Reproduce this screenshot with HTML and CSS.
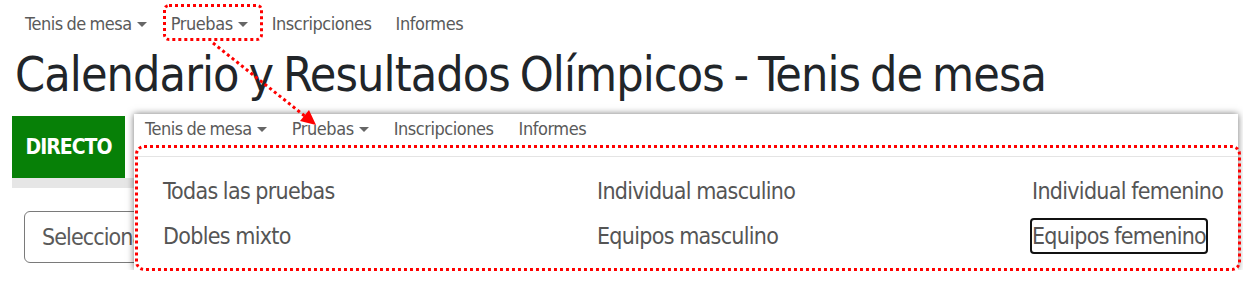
FILE: index.html
```html
<!DOCTYPE html>
<html lang="es">
<head>
<meta charset="utf-8">
<title>Calendario y Resultados Olímpicos - Tenis de mesa</title>
<link rel="stylesheet" href="styles.css">
</head>
<body>
<nav class="topnav">
  <a class="navitem">Tenis de mesa<span class="caret"></span></a>
  <a class="navitem">Pruebas<span class="caret"></span></a>
  <a class="navitem">Inscripciones</a>
  <a class="navitem">Informes</a>
</nav>
<h1 class="title">Calendario y Resultados Olímpicos - Tenis de mesa</h1>
<main class="content">
  <div class="tabbar">
    <div class="tab-live">DIRECTO</div>
  </div>
  <div class="select">Seleccionar</div>
</main>

<section class="overlay">
  <nav class="innernav">
    <a class="navitem">Tenis de mesa<span class="caret"></span></a>
    <a class="navitem">Pruebas<span class="caret"></span></a>
    <a class="navitem">Inscripciones</a>
    <a class="navitem">Informes</a>
  </nav>
  <div class="menu">
    <a class="menuitem">Todas las pruebas</a>
    <a class="menuitem">Individual masculino</a>
    <a class="menuitem">Individual femenino</a>
    <a class="menuitem">Dobles mixto</a>
    <a class="menuitem">Equipos masculino</a>
    <a class="menuitem focused">Equipos femenino</a>
  </div>
</section>

<div class="mark mark-top"></div>
<div class="mark mark-menu"></div>
<svg class="arrow" width="1243" height="292" viewBox="0 0 1243 292">
  <line x1="213" y1="43" x2="306" y2="117" stroke="#ff0000" stroke-width="3" stroke-dasharray="3 3"/>
  <polygon points="316,125 300,121 309,110" fill="#ff0000"/>
</svg>
</body>
</html>
```
FILE: styles.css
```css
* { box-sizing: border-box; }
body {
  margin: 0;
  background: #fff;
  font-family: "DejaVu Sans Condensed", "DejaVu Sans", sans-serif;
  position: relative;
  width: 1243px;
  height: 292px;
  overflow: hidden;
}
.topnav {
  display: flex;
  height: 44px;
  padding: 12px 0 0 25px;
}
.navitem {
  display: inline-flex;
  align-items: center;
  height: 24px;
  line-height: 24px;
  font-size: 18px;
  letter-spacing: -0.45px;
  word-spacing: -1px;
  color: #5a5a5a;
  margin-right: 24px;
  white-space: nowrap;
}
.caret {
  display: inline-block;
  width: 0;
  height: 0;
  margin-left: 5px;
  border-left: 5px solid transparent;
  border-right: 5px solid transparent;
  border-top: 5px solid #666;
}
.title {
  margin: 0 0 0 15px;
  font-size: 48px;
  letter-spacing: -0.9px;
  word-spacing: -3px;
  line-height: 60px;
  font-weight: normal;
  color: #212529;
  white-space: nowrap;
}
.content {
  margin: 12px 0 0 12px;
}
.tabbar {
  display: flex;
  width: 600px;
  border-bottom: 10px solid #e6e6e6;
}
.tab-live {
  width: 113px;
  height: 62px;
  background: #078007;
  color: #fff;
  font-weight: bold;
  font-size: 21px;
  letter-spacing: -1px;
  display: flex;
  align-items: center;
  justify-content: center;
}
.select {
  margin: 23px 0 0 12px;
  width: 300px;
  height: 52px;
  border: 1px solid #7a7a7a;
  border-radius: 6px;
  padding-left: 17px;
  font-size: 23px;
  letter-spacing: -0.9px;
  line-height: 50px;
  color: #5a5a5a;
  overflow: hidden;
  white-space: nowrap;
}
.overlay {
  position: absolute;
  left: 134px;
  top: 114px;
  width: 1104px;
  height: 156px;
  background: #fff;
  box-shadow: 0 0 7px rgba(0, 0, 0, 0.55);
  clip-path: inset(-12px -12px 0 -12px);
}
.innernav {
  display: flex;
  height: 43px;
  padding: 3px 0 0 11px;
  border-bottom: 1px solid #e4e4e4;
}
.innernav .navitem { margin-right: 25px; }
.menu {
  display: grid;
  grid-template-columns: 434px 435px auto;
  justify-items: start;
  row-gap: 9.5px;
  padding: 15.5px 0 0 27px;
}
.menuitem {
  font-size: 23px;
  letter-spacing: -0.7px;
  word-spacing: -0.5px;
  line-height: 32px;
  color: #555;
  border: 2px solid transparent;
  border-radius: 4px;
  white-space: nowrap;
}
.menuitem.focused {
  border-color: #111;
}
.mark {
  position: absolute;
  border: 3px dotted #ff0000;
}
.mark-top {
  left: 163px;
  top: 4px;
  width: 100px;
  height: 37px;
  border-radius: 6px;
}
.mark-menu {
  left: 135px;
  top: 145px;
  width: 1106px;
  height: 126px;
  border-radius: 9px;
}
.arrow {
  position: absolute;
  left: 0;
  top: 0;
  pointer-events: none;
}
```
